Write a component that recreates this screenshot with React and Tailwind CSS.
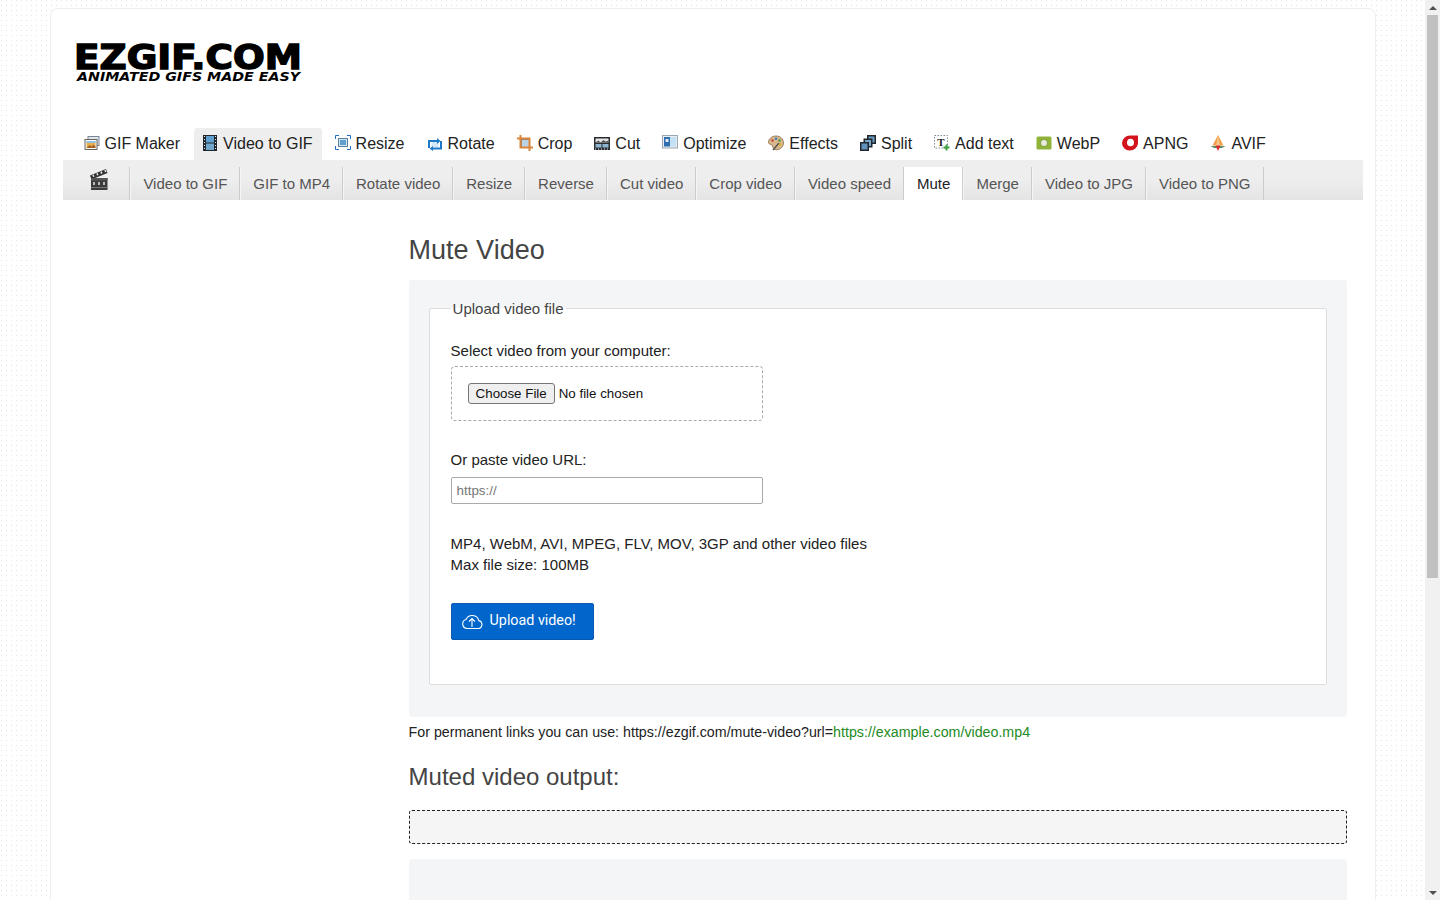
import React from 'react';

const GifMakerIcon = () => (
    <svg viewBox="0 0 16 16" className="w-4 h-4">
        <rect x="4" y="1.500" width="11" height="9" fill="#dfe6ee" stroke="#7a8794" />
        <rect x="1" y="4.500" width="12" height="10" fill="#fff" stroke="#66645c" />
        <rect x="2.500" y="6" width="9" height="7" fill="#e8b04a" />
        <path d="M2.500 13l3-3 2 1.500 2-2 2 2v1.500z" fill="#a5642a" />
        <rect x="2.500" y="6" width="9" height="2" fill="#8fc0e8" />
    </svg>
);

const FilmIcon = () => (
    <svg viewBox="0 0 16 16" className="w-4 h-4">
        <rect x="1" y="0" width="14" height="16" fill="#20262c" />
        <rect x="4" y="1" width="8" height="6.500" fill="#5f9fd0" />
        <rect x="4" y="8.500" width="8" height="6.500" fill="#6fa6c9" />
        <path d="M2 1.500h1M2 4.500h1M2 7.500h1M2 10.500h1M2 13.500h1M13 1.500h1M13 4.500h1M13 7.500h1M13 10.500h1M13 13.500h1" stroke="#e4e8ec" strokeWidth="1.200" />
    </svg>
);

const ResizeIcon = () => (
    <svg viewBox="0 0 16 16" className="w-4 h-4">
        <rect x="3.500" y="3.500" width="9" height="8" fill="#cfe6f7" stroke="#5b7f9c" />
        <rect x="5" y="5" width="6" height="5" fill="#5fa0cf" />
        <path d="M.5 4V.5H4M12 .5h3.500V4M15.500 11v3.500H12M4 14.500H.5V11" fill="none" stroke="#1f6fc0" />
    </svg>
);

const RotateIcon = () => (
    <svg viewBox="0 0 16 16" className="w-4 h-4">
        <rect x="4.500" y="6" width="7" height="6" fill="#d3e8f8" />
        <path d="M2 13V6h9.500M14 6v7.500H5" fill="none" stroke="#1f78c8" strokeWidth="2" />
        <path d="M10 3l3.500 3L10 9zM6 11l-3.500 2.500L6 16z" fill="#1f78c8" />
    </svg>
);

const CropIcon = () => (
    <svg viewBox="0 0 16 16" className="w-4 h-4">
        <rect x="4.500" y="4.500" width="8" height="8" fill="#bcd3e6" stroke="#7c858e" />
        <path d="M3.500 0v12.500H16M0 3.500h12.500V16" fill="none" stroke="#d9853a" strokeWidth="2" />
    </svg>
);

const CutIcon = () => (
    <svg viewBox="0 0 16 16" className="w-4 h-4">
        <rect x="0" y="2" width="16" height="13" fill="#2a2d30" />
        <rect x="1.500" y="3.500" width="13" height="4" fill="#e6e9ec" />
        <path d="M1.500 7.500l3-2 2 2 3-2.500 2 1.500 3-1v2z" fill="#555" />
        <rect x="1.500" y="9" width="6" height="3.500" fill="#8fb4d0" />
        <rect x="8.500" y="9" width="6" height="3.500" fill="#8fb4d0" />
        <path d="M1 14h1M4 14h1M7 14h1M10 14h1M13 14h1" stroke="#e4e8ec" />
    </svg>
);

const OptimizeIcon = () => (
    <svg viewBox="0 0 16 16" className="w-4 h-4">
        <rect x="0.500" y="0.500" width="15" height="12.500" fill="#e9eef3" stroke="#9aa6b2" />
        <rect x="2" y="2" width="6" height="9.500" fill="#2f6fb0" />
        <rect x="8" y="2" width="6" height="9.500" fill="#c3e0f4" />
        <rect x="3.500" y="4" width="3" height="3" fill="#dbeaf6" />
    </svg>
);

const PaletteIcon = () => (
    <svg viewBox="0 0 16 16" className="w-4 h-4">
        <path d="M8 1C3.500 1 .5 4 .5 7.500 .5 9.500 3 9 4 10c1 1 .5 3.500 3 4.500 4 1 8.500-2 8.500-6.500C15.500 4 12.500 1 8 1z" fill="#d9b98c" stroke="#8a6b48" strokeWidth=".8" />
        <circle cx="4.500" cy="5.500" r="1.300" fill="#c9453a" />
        <circle cx="8" cy="3.800" r="1.300" fill="#3f7fc0" />
        <circle cx="11.500" cy="5.500" r="1.300" fill="#4f9a45" />
        <circle cx="12" cy="9.500" r="1.300" fill="#e0b52e" />
        <path d="M5 15l6-7" stroke="#555" strokeWidth="1.400" />
    </svg>
);

const SplitIcon = () => (
    <svg viewBox="0 0 16 16" className="w-4 h-4">
        <rect x="7" y="0" width="9" height="9" fill="#20262c" />
        <rect x="8.500" y="1.500" width="6" height="6" fill="#6a9cc4" />
        <rect x="3.500" y="3.500" width="9" height="9" fill="#20262c" />
        <rect x="5" y="5" width="6" height="6" fill="#7aa8cc" />
        <rect x="0" y="7" width="9" height="9" fill="#20262c" />
        <rect x="1.500" y="8.500" width="6" height="6" fill="#5f93bd" />
    </svg>
);

const AddTextIcon = () => (
    <svg viewBox="0 0 16 16" className="w-4 h-4">
        <rect x="0.500" y="0.500" width="13" height="12.500" fill="#fff" stroke="#7a8794" strokeDasharray="1.500 1.500" />
        <text x="7" y="10.500" textAnchor="middle" fontSize="11" fontWeight="700" fontFamily="'Liberation Serif', serif" fill="#222">T</text>
        <path d="M12.500 9.500v6M9.500 12.500h6" stroke="#43a047" strokeWidth="2" />
    </svg>
);

const WebpIcon = () => (
    <svg viewBox="0 0 16 16" className="w-4 h-4">
        <rect x="0.500" y="1.500" width="15" height="13" rx="1.500" fill="#8fb339" />
        <circle cx="8" cy="8" r="3.500" fill="#e8ecdc" stroke="#5f7d1c" strokeWidth=".6" />
    </svg>
);

const ApngIcon = () => (
    <svg viewBox="0 0 16 16" className="w-4 h-4">
        <path d="M8 .5H16V8.500A8 7.500 0 118 .5z" fill="#d3141c" />
        <ellipse cx="8.500" cy="7.500" rx="3.500" ry="3.800" fill="#fff" />
    </svg>
);

const AvifIcon = () => (
    <svg viewBox="0 0 16 16" className="w-4 h-4">
        <path d="M8 0l5.500 10.500h-11z" fill="#f0a04b" />
        <path d="M8 0l1.800 10.500H6.200z" fill="#f7c98f" />
        <path d="M.5 11h15L12 13H4z" fill="#5e8d6c" />
        <path d="M5.500 10.500h5L8 16z" fill="#d52b2b" />
    </svg>
);

const ClapperIcon = () => (
    <svg viewBox="0 0 18 21" className="w-[18px] h-[21px]">
        <path d="M0 6.500L16 0l1.500 4L1.500 10.500z" fill="#333" />
        <path d="M3 5.800l.8 2M7 4.200l.8 2M11 2.600l.8 2M15 1l.8 2" stroke="#e8e8e8" strokeWidth="1.500" />
        <rect x="1" y="9" width="16.500" height="12" fill="#3c3c3c" />
        <rect x="1" y="9" width="16.500" height="2.500" fill="#555" />
        <path d="M4 13v3M9 13v3M14 13v3" stroke="#e5e5e5" strokeWidth="1.500" />
        <path d="M1 18.500h16.500" stroke="#777" />
    </svg>
);

const CloudUploadIcon = () => (
    <svg viewBox="2 1 21 16" className="w-[21px] h-4" fill="none" stroke="#fff" strokeWidth="1.100">
        <path d="M7 16.500h11a4 4 0 00.8-7.900A6.800 6.800 0 006 7.500a4.600 4.600 0 001 9z" />
        <path d="M12 15V6.500M9 9.500l3-3 3 3" />
    </svg>
);

const mainTabs = [
    { label: 'GIF Maker', icon: <GifMakerIcon /> },
    { label: 'Video to GIF', icon: <FilmIcon />, active: true },
    { label: 'Resize', icon: <ResizeIcon /> },
    { label: 'Rotate', icon: <RotateIcon /> },
    { label: 'Crop', icon: <CropIcon /> },
    { label: 'Cut', icon: <CutIcon /> },
    { label: 'Optimize', icon: <OptimizeIcon /> },
    { label: 'Effects', icon: <PaletteIcon /> },
    { label: 'Split', icon: <SplitIcon /> },
    { label: 'Add text', icon: <AddTextIcon /> },
    { label: 'WebP', icon: <WebpIcon /> },
    { label: 'APNG', icon: <ApngIcon /> },
    { label: 'AVIF', icon: <AvifIcon /> },
];

const subTabs = ['Video to GIF', 'GIF to MP4', 'Rotate video', 'Resize', 'Reverse', 'Cut video', 'Crop video', 'Video speed', 'Mute', 'Merge', 'Video to JPG', 'Video to PNG'];

const App = () => {
    return (
        <div className="flex h-screen overflow-hidden font-['Liberation_Sans',Arial,sans-serif] text-[15px] text-[#222]">
            <div className="flex-1 min-w-0 overflow-hidden pt-2 pl-[50px] pr-[49px] bg-white bg-[linear-gradient(to_right,#fff_4px,transparent_4px),linear-gradient(to_bottom,#fff_4px,#e6e6e6_4px)] bg-[length:5px_5px] bg-[position:2px_1px]">
                <div className="bg-white border border-[#eeeeee] rounded-lg px-3 min-h-[1000px]">
                    {/* Logo */}
                    <div className="h-[119px] pt-[27px] pl-[11px]">
                        <svg width="270" height="52" viewBox="0 0 270 52" className="block">
                            <text x="0" y="33" textLength="228" lengthAdjust="spacingAndGlyphs" fontFamily="'DejaVu Sans', sans-serif" fontWeight="700" fontSize="33" stroke="#000" strokeWidth="1.400" fill="#000">EZGIF.COM</text>
                            <text x="3" y="45" textLength="223" lengthAdjust="spacingAndGlyphs" fontFamily="'DejaVu Sans', sans-serif" fontWeight="700" fontStyle="italic" fontSize="12" fill="#000">ANIMATED GIFS MADE EASY</text>
                        </svg>
                    </div>

                    {/* Main tabs */}
                    <div className="flex h-8 pl-[12.5px] gap-[5px] text-base text-[#222]">
                        {mainTabs.map((tab) => (
                            <a key={tab.label} className={`flex items-center pl-2 pr-[9px] gap-[5px] rounded-t-[3px] ${tab.active ? 'bg-[#eeeeee]' : ''}`}>
                                <span className="-mt-[3px]">{tab.icon}</span>
                                <span>{tab.label}</span>
                            </a>
                        ))}
                    </div>

                    {/* Sub tabs */}
                    <div className="flex h-10 pt-[7px] bg-gradient-to-b from-[#eeeeee] via-[#eeeeee] to-[#e4e4e4]">
                        <div className="w-[67.4px] flex justify-center border-r border-[#cccccc]">
                            <span className="mt-[2px] ml-[6px]"><ClapperIcon /></span>
                        </div>
                        {subTabs.map((tab) => (
                            <a key={tab} className={`flex items-center pt-[1px] pl-3 pr-3 border-l border-r border-l-[#f5f5f5] border-r-[#cccccc] ${tab === 'Mute' ? 'bg-white text-[#222] border-l-white' : 'text-[#555555]'}`}>
                                {tab}
                            </a>
                        ))}
                    </div>

                    {/* Page body */}
                    <div className="flex pr-4">
                        <aside className="w-[345.6px] shrink-0" />
                        <main className="flex-1 min-w-0">
                            <h1 className="text-[27px] leading-[32px] text-[#444444] mt-[34px] mb-[14px]">Mute Video</h1>

                            <div className="bg-[#f4f5f6] rounded-[3px] px-5 pt-[20px] pb-8">
                                <fieldset className="bg-white border border-[#dddddd] rounded-[2px] pl-[21px] pr-5 h-[385px]">
                                    <legend className="px-[2px] text-[#444444] leading-[17px]">Upload video file</legend>
                                    <p className="mt-[23px] leading-[21px]">Select video from your computer:</p>
                                    <div className="mt-[5px] w-[312px] h-[55px] border border-dashed border-[#aaaaaa] rounded-[4px] pl-4 flex items-center gap-1 text-[13.33px] text-[#111]">
                                        <button className="h-[21px] px-[7px] bg-[#efefef] border border-[#767676] rounded-[3px]">Choose File</button>
                                        <span>No file chosen</span>
                                    </div>
                                    <p className="mt-[28px] leading-[21px]">Or paste video URL:</p>
                                    <input type="text" placeholder="https://" className="block mt-[7px] w-[312px] h-[27px] border border-[#aaaaaa] rounded-[2px] px-[5px] text-[13.33px] placeholder:text-[#757575]" />
                                    <p className="mt-[29px] leading-[21px]">MP4, WebM, AVI, MPEG, FLV, MOV, 3GP and other video files<br />Max file size: 100MB</p>
                                    <button className="mt-[28px] w-[143px] h-[37px] flex items-center gap-[7px] pl-[10px] pb-[2px] bg-[#0066cc] border border-[#0a58b0] rounded-[2px] font-['Roboto',sans-serif] text-[14.3px] text-white">
                                        <CloudUploadIcon />
                                        Upload video!
                                    </button>
                                </fieldset>
                            </div>

                            <p className="mt-[5px] leading-[21px] text-[14.24px]">For permanent links you can use: https://ezgif.com/mute-video?url=<span className="text-[#228b22]">https://example.com/video.mp4</span></p>

                            <h2 className="mt-[20px] text-2xl leading-[28px] text-[#444444]">Muted video output:</h2>

                            <div className="mt-[19px] h-[34px] bg-[#f5f5f5] border border-dashed border-[#222222] rounded-[3px]" />

                            <div className="mt-[15px] h-[100px] bg-[#f4f5f6] rounded-[3px]" />
                        </main>
                    </div>
                </div>
            </div>

            {/* Scrollbar */}
            <div className="w-[15px] shrink-0 bg-[#f1f1f1] flex flex-col items-center">
                <div className="h-[15px] flex items-center justify-center">
                    <div className="w-0 h-0 border-x-[4px] border-x-transparent border-b-[4px] border-b-[#505050]" />
                </div>
                <div className="w-[11px] h-[563px] bg-[#c1c1c1]" />
                <div className="flex-1" />
                <div className="h-[15px] flex items-center justify-center">
                    <div className="w-0 h-0 border-x-[4px] border-x-transparent border-t-[4px] border-t-[#505050]" />
                </div>
            </div>
        </div>
    );
};

export default App;
